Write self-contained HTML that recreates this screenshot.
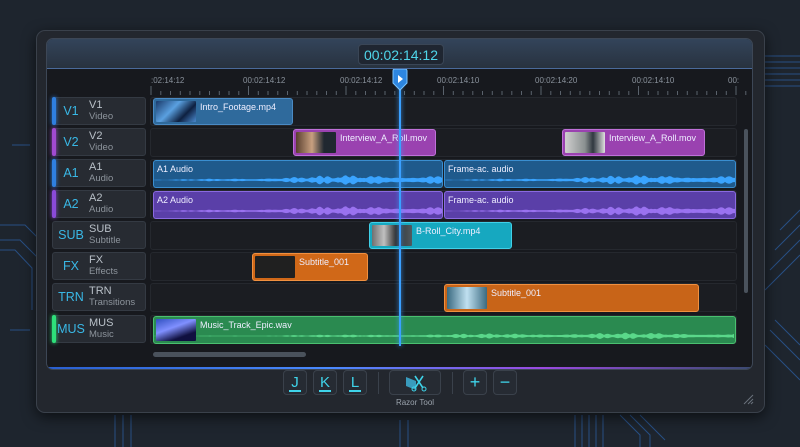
<!DOCTYPE html>
<html><head><meta charset="utf-8"><style>
*{box-sizing:border-box;margin:0;padding:0}
body{width:800px;height:447px;overflow:hidden;background:#1e252e;font-family:"Liberation Sans",sans-serif;position:relative}
.abs{position:absolute}
#outer{left:36px;top:30px;width:729px;height:383px;background:#23272e;border:1px solid #3a414b;border-radius:9px;box-shadow:0 4px 14px rgba(0,0,0,.6)}
#inner{left:46px;top:38px;width:707px;height:332px;background:#17191e;border:1px solid #3d4756;border-radius:7px;overflow:hidden}
#hdr{left:0;top:0;width:707px;height:30px;background:linear-gradient(#33445a,#28323f);border-bottom:1px solid #4a6a9a}
#tc{left:311px;top:5px;width:86px;height:21px;background:#1f2631;border:1px solid #3a4656;border-radius:4px;color:#4fd6ea;font-size:14px;text-align:center;line-height:20px}
.row{height:28px;left:6px;width:94px;background:#272b32;border:1px solid #343a43;border-radius:3px}
.bar{position:absolute;left:-1px;top:-1px;bottom:-1px;width:4px;border-radius:2px}
.ab{position:absolute;left:0;width:36px;top:6px;text-align:center;color:#39b8e6;font-size:12.5px}
.nm{position:absolute;left:36px;top:2px;color:#b9c0c8;font-size:11px;line-height:11px}
.nm small{font-size:9.5px;color:#8d949c;display:block}
.lane{left:104px;width:587px;height:29px;background:#1b1d22;border:1px solid #25282e;border-radius:3px}
.clip{position:absolute;border-radius:3px;color:#eef;font-size:9px;overflow:hidden}
.clip span{position:absolute;top:3px}
.th{position:absolute;left:2px;top:2px;width:40px;bottom:2px;border-radius:1px}
.btn{top:370px;width:24px;height:25px;background:#262b33;border:1px solid #3a414b;border-radius:4px;color:#3fd4ea;font-size:15px;text-align:center;line-height:23px}
</style></head><body>
<svg class="abs" style="left:0;top:0" width="800" height="447">
<g stroke="#2a5a9a" stroke-width="1" fill="none" opacity=".8">
<path d="M0 240 L20 240 L40 260 L40 300 M0 250 L15 250 L32 268 L32 310 M0 225 L25 225 L45 245 L45 290 M10 330 L30 330 M12 145 L30 145"/>
<path d="M765 56 L800 56 M765 62 L800 62 M765 68 L800 68 M765 74 L800 74 M765 80 L800 80 M765 86 L800 86"/>
<path d="M780 230 L800 210 M775 250 L800 225 M770 270 L800 240 M765 290 L800 255 M770 330 L800 360 M765 345 L800 380 M775 320 L800 345"/>
<path d="M575 415 L575 447 M582 415 L582 447 M589 415 L589 447 M596 415 L596 447 M603 415 L603 447 M620 415 L640 435 L640 447 M630 415 L650 435 L650 447 M640 415 L665 440"/>
<path d="M115 415 L115 447 M123 415 L123 447 M131 415 L131 447 M400 420 L400 447 M408 420 L408 447"/>
</g></svg>
<div id="outer" class="abs"></div>
<div id="inner" class="abs">
<div id="hdr" class="abs"><div id="tc" class="abs">00:02:14:12</div></div>
<svg class="abs" style="left:0;top:30px" width="707" height="302">
<g fill="#8a929c" font-size="8" font-family="Liberation Sans">
<text x="104" y="14">:02:14:12</text><text x="196" y="14">00:02:14:12</text><text x="293" y="14">00:02:14:12</text><text x="390" y="14">00:02:14:10</text><text x="488" y="14">00:02:14:20</text><text x="585" y="14">00:02:14:10</text><text x="681" y="14">00:</text>
</g>
<path id="ticks" stroke="#5a626c" stroke-width="1"/>
<rect x="106" y="283" width="153" height="5" rx="2.5" fill="#4a525c"/>
<rect x="697" y="60" width="4" height="164" rx="2" fill="#4a525c"/>
</svg>
<div class="abs" style="left:0;top:328px;width:707px;height:2px;background:linear-gradient(90deg,#2a5fd0,#4a8aff 40%,#9a4ae0 70%,#3a4a70)"></div>
</div>
<div id="rows"></div>
<div class="abs" style="left:399px;top:74px;width:2px;height:272px;background:#3aa0ff;box-shadow:0 0 5px #3aa0ff"></div>
<svg class="abs" style="left:392px;top:69px" width="16" height="22"><path d="M1 2 Q1 0 3 0 L13 0 Q15 0 15 2 L15 14 L8 21 L1 14 Z" fill="#2d86e0" stroke="#7ac4ff"/><path d="M6 6 L11 10 L6 14Z" fill="#fff"/></svg>
<div class="abs btn" style="left:283px">J<div style="position:absolute;left:5px;right:5px;bottom:2px;height:2px;background:#3fd4ea"></div></div>
<div class="abs btn" style="left:313px">K<div style="position:absolute;left:5px;right:5px;bottom:2px;height:2px;background:#3fd4ea"></div></div>
<div class="abs btn" style="left:343px">L<div style="position:absolute;left:5px;right:5px;bottom:2px;height:2px;background:#3fd4ea"></div></div>
<div class="abs" style="left:378px;top:372px;width:1px;height:22px;background:#3a414b"></div>
<div class="abs btn" style="left:389px;width:52px"><svg width="24" height="20" style="margin-top:2px"><path d="M3 4 L13 8 L13 17 L3 13Z" fill="#3fb8e0" opacity=".8"/><path d="M12 3 L20 15 M20 3 L12 15" stroke="#3fd4ea" stroke-width="1.6"/><circle cx="11" cy="16" r="2" fill="none" stroke="#3fd4ea"/><circle cx="21" cy="16" r="2" fill="none" stroke="#3fd4ea"/></svg></div>
<div class="abs" style="left:389px;top:398px;width:52px;text-align:center;color:#9aa2ac;font-size:8px">Razor Tool</div>
<div class="abs" style="left:452px;top:372px;width:1px;height:22px;background:#3a414b"></div>
<div class="abs btn" style="left:463px;font-size:18px">+</div>
<div class="abs btn" style="left:493px;font-size:18px">−</div>
<script>
var rows=[["V1","V1","Video","#2f7fe0"],["V2","V2","Video","#a14ad0"],["A1","A1","Audio","#2f7fe0"],["A2","A2","Audio","#8a4ad8"],["SUB","SUB","Subtitle",""],["FX","FX","Effects",""],["TRN","TRN","Transitions",""],["MUS","MUS","Music","#2ee07a"]];
var tops=[97,128,159,190,221,252,283,315],h="";
rows.forEach(function(r,i){h+='<div class="abs row" style="top:'+tops[i]+'px;left:52px">'+(r[3]?'<div class="bar" style="background:'+r[3]+';box-shadow:0 0 4px '+r[3]+'"></div>':'')+'<div class="ab">'+r[0]+'</div><div class="nm">'+r[1]+'<small>'+r[2]+'</small></div></div>';
h+='<div class="abs lane" style="top:'+tops[i]+'px;left:150px"></div>';});
function wf(w,c,amp){var s='<svg style="position:absolute;left:0;top:12px" width="'+w+'" height="14"><path fill="'+c+'" d="M0 7';var pts=[];for(var x=0;x<=w;x+=2){var e=Math.min(1,Math.max(0.05,(x/w)*1.3))*(0.3+0.7*Math.abs(Math.sin(x*0.37)*Math.cos(x*0.113)*Math.sin(x*0.021+1)));pts.push([x,7-e*amp]);}pts.forEach(function(p){s+=' L'+p[0]+' '+p[1].toFixed(1);});for(var k=pts.length-1;k>=0;k--)s+=' L'+pts[k][0]+' '+(14-pts[k][1]).toFixed(1);return s+'Z"/></svg>';}
function clip(l,t,w,hh,bg,bd,label,thumb,wave){var c='<div class="clip" style="left:'+l+'px;top:'+t+'px;width:'+w+'px;height:'+hh+'px;background:'+bg+';border:1px solid '+bd+'">';if(wave)c+=wave;if(thumb)c+='<div class="th" style="background:'+thumb+'"></div>';c+='<span style="left:'+(thumb?46:3)+'px">'+label+'</span></div>';return c;}
h+=clip(153,98,140,27,"#2f6a9c","#4a8ac4","Intro_Footage.mp4","linear-gradient(135deg,#1a3a6a,#5aa0e0 40%,#0e2040 70%,#4a8ad0)");
h+=clip(293,129,143,27,"#9a42b0","#c070d8","Interview_A_Roll.mov","linear-gradient(90deg,#5a4030,#c8a080 40%,#202830 70%)");
h+=clip(562,129,143,27,"#9a42b0","#c070d8","Interview_A_Roll.mov","linear-gradient(90deg,#d0d0d0,#8a9090 50%,#303840 70%,#e0e0e0)");
h+=clip(153,160,290,28,"#1f5a8c","#3a8ed0","A1 Audio","",wf(288,"#3aa4ff",6));
h+=clip(444,160,292,28,"#1f5a8c","#3a8ed0","Frame-ac. audio","",wf(290,"#3aa4ff",6));
h+=clip(153,191,290,28,"#5a3fa8","#8a6ae0","A2 Audio","",wf(288,"#9a72f0",6));
h+=clip(444,191,292,28,"#5a3fa8","#8a6ae0","Frame-ac. audio","",wf(290,"#9a72f0",6));
h+=clip(369,222,143,27,"#16a8c0","#40d0e8","B-Roll_City.mp4","linear-gradient(90deg,#707070,#c0c0c0 30%,#303030 60%,#505a60)");
h+=clip(252,253,116,28,"#d06818","#f09040","Subtitle_001","#202020");
h+=clip(444,284,255,28,"#c86418","#f09040","Subtitle_001","linear-gradient(90deg,#3a6a80,#c0e0f0 50%,#3a6a80)");
h+=clip(153,316,583,28,"#2a8a50","#4ac070","Music_Track_Epic.wav","linear-gradient(160deg,#3050c0,#8090ff 40%,#101040 75%)",wf(581,"#5ad88a",3.5));
document.getElementById("rows").innerHTML=h;
var d="";for(var x=104;x<700;x+=9.75){var big=Math.round((x-104)/9.75)%10==0;d+="M"+x.toFixed(1)+" "+(big?17:22)+" L"+x.toFixed(1)+" 26 ";}
document.getElementById("ticks").setAttribute("d",d);
</script>
<svg class="abs" style="left:742px;top:393px" width="12" height="12"><path d="M2 11 L11 2 M6 11 L11 6 M9 11 L11 9" stroke="#6a727c"/></svg>
</body></html>
